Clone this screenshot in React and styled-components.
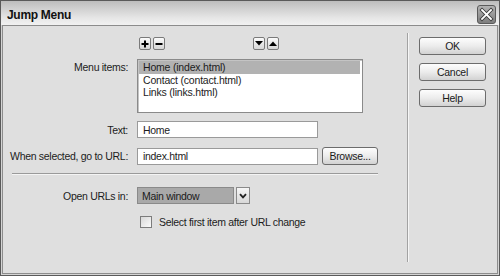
import React from 'react';
import styled, { createGlobalStyle } from 'styled-components';

const GlobalStyle = createGlobalStyle`
  html, body {
    margin: 0;
    padding: 0;
    background: #dfdfdf;
  }
  * {
    box-sizing: border-box;
  }
`;

const Window = styled.div`
  width: 500px;
  height: 276px;
  border: 1px solid #5a5a5a;
  background: #d4d4d4;
  display: flex;
  flex-direction: column;
  font-family: "Liberation Sans", Arial, sans-serif;
  font-size: 10.5px;
  letter-spacing: -0.3px;
  color: #1c1c1c;
`;

const TitleBar = styled.div`
  height: 24px;
  display: flex;
  align-items: center;
  justify-content: space-between;
  padding: 0 3px 0 6px;
  background: linear-gradient(#bdbdbd, #e6e6e6 70%, #f1f1f1);
`;

const Title = styled.span`
  font-weight: bold;
  font-size: 12px;
  letter-spacing: -0.3px;
  color: #111;
  margin-top: 4px;
`;

const CloseButton = styled.div`
  width: 19px;
  height: 19px;
  margin-top: 2px;
  display: flex;
`;

const Body = styled.div`
  flex: 1;
  margin: 0 1px 1px 1px;
  border: 1px solid #8c8c8c;
  background: #dfdfdf;
  display: flex;
`;

const Main = styled.div`
  width: 403px;
  padding-top: 11px;
  display: flex;
  flex-direction: column;
`;

const Row = styled.div`
  display: grid;
  grid-template-columns: 125px 1fr;
  column-gap: 9px;
  align-items: ${p => (p.$top ? 'start' : 'center')};
  margin-top: ${p => p.$gap || 0}px;
`;

const Label = styled.span`
  text-align: right;
  white-space: nowrap;
  padding-top: ${p => (p.$top ? 2 : 0)}px;
`;

const Controls = styled.div`
  display: flex;
  align-items: center;
  gap: ${p => p.$gap || 0}px;
`;

const ToolGroup = styled.div`
  display: flex;
  gap: 2px;
  margin-left: ${p => p.$offset || 0}px;
`;

const MiniButton = styled.div`
  width: 12px;
  height: 13px;
  border: 1px solid #7a7a7a;
  border-radius: 2px;
  background: linear-gradient(#fbfbfb, #d6d6d6);
  display: flex;
  align-items: center;
  justify-content: center;
`;

const ListBox = styled.div`
  width: 226px;
  height: 54px;
  border: 1px solid #8a8a8a;
  box-shadow: inset 1px 1px 0 #c4c4c4;
  background: #fff;
  padding: 1px 2px 0 1px;
`;

const ListItem = styled.div`
  height: 12.5px;
  line-height: 12.5px;
  padding-left: 4px;
  letter-spacing: -0.2px;
  background: ${p => (p.$selected ? '#b2b2b2' : 'transparent')};
  white-space: nowrap;
`;

const TextField = styled.div`
  width: 181px;
  height: 17px;
  border: 1px solid #9a9a9a;
  background: #fff;
  padding-left: 5px;
  display: flex;
  align-items: center;
`;

const Button = styled.div`
  width: ${p => p.$width}px;
  height: 18px;
  border: 1px solid #6c6c6c;
  border-radius: 3px;
  background: linear-gradient(#fdfdfd, #ececec 50%, #d2d2d2);
  display: flex;
  align-items: center;
  justify-content: center;
  color: #1a1a1a;
`;

const Separator = styled.div`
  margin: 8px 0 0 9px;
  width: 366px;
  height: 2px;
  border-top: 1px solid #9a9a9a;
  border-bottom: 1px solid #f4f4f4;
`;

const SelectField = styled.div`
  width: 97px;
  height: 17px;
  border: 1px solid #8a8a8a;
  background: #a9a9a9;
  padding-left: 4px;
  display: flex;
  align-items: center;
  color: #1a1a1a;
`;

const SelectArrow = styled.div`
  width: 14px;
  height: 17px;
  border: 1px solid #8a8a8a;
  background: linear-gradient(#f6f6f6, #d8d8d8);
  display: flex;
  align-items: center;
  justify-content: center;
`;

const CheckBox = styled.div`
  width: 12px;
  height: 12px;
  border: 1px solid #7c7c7c;
  background: linear-gradient(135deg, #d8d8d8, #fafafa);
  margin-left: 3px;
`;

const VDivider = styled.div`
  width: 2px;
  margin: 7px 0 11px 1px;
  border-left: 1px solid #a2a2a2;
  border-right: 1px solid #f6f6f6;
`;

const Side = styled.div`
  padding: 11px 0 0 10px;
  display: flex;
  flex-direction: column;
  gap: 8px;
`;

const Plus = () => (
  <svg width="8" height="8" viewBox="0 0 8 8">
    <path d="M4 0.5V7.5M0.5 4H7.5" stroke="#000" strokeWidth="2" />
  </svg>
);

const Minus = () => (
  <svg width="8" height="8" viewBox="0 0 8 8">
    <path d="M0.5 4H7.5" stroke="#000" strokeWidth="2" />
  </svg>
);

const Tri = ({ up }) => (
  <svg width="8" height="5" viewBox="0 0 8 5">
    <path d={up ? 'M0 5L4 0.5L8 5Z' : 'M0 0L8 0L4 4.5Z'} fill="#000" />
  </svg>
);

const Chevron = () => (
  <svg width="8" height="6" viewBox="0 0 8 6">
    <path d="M1 1.2L4 4.4L7 1.2" stroke="#222" strokeWidth="1.8" fill="none" />
  </svg>
);

const CloseIcon = () => (
  <svg width="19" height="19" viewBox="0 0 19 19">
    <defs>
      <linearGradient id="cg" x1="0" y1="0" x2="0" y2="1">
        <stop offset="0" stopColor="#b4b4b4" />
        <stop offset="1" stopColor="#7c7c7c" />
      </linearGradient>
    </defs>
    <rect x="0.5" y="0.5" width="18" height="18" rx="2.5" fill="url(#cg)" stroke="#5a5a5a" />
    <path d="M5 5L14 14M14 5L5 14" stroke="#3c3c3c" strokeWidth="3.6" strokeLinecap="square" />
    <path d="M5 5L14 14M14 5L5 14" stroke="#fff" strokeWidth="1.8" strokeLinecap="square" />
  </svg>
);

export default function App() {
  return (
    <>
      <GlobalStyle />
      <Window>
        <TitleBar>
          <Title>Jump Menu</Title>
          <CloseButton><CloseIcon /></CloseButton>
        </TitleBar>
        <Body>
          <Main>
            <Row>
              <span />
              <Controls>
                <ToolGroup $offset={2}>
                  <MiniButton><Plus /></MiniButton>
                  <MiniButton><Minus /></MiniButton>
                </ToolGroup>
                <ToolGroup $offset={88}>
                  <MiniButton><Tri /></MiniButton>
                  <MiniButton><Tri up /></MiniButton>
                </ToolGroup>
              </Controls>
            </Row>
            <Row $gap={9} $top>
              <Label $top>Menu items:</Label>
              <ListBox>
                <ListItem $selected>Home (index.html)</ListItem>
                <ListItem>Contact (contact.html)</ListItem>
                <ListItem>Links (links.html)</ListItem>
              </ListBox>
            </Row>
            <Row $gap={8}>
              <Label>Text:</Label>
              <TextField>Home</TextField>
            </Row>
            <Row $gap={9}>
              <Label>When selected, go to URL:</Label>
              <Controls $gap={4}>
                <TextField>index.html</TextField>
                <Button $width={56}>Browse...</Button>
              </Controls>
            </Row>
            <Separator />
            <Row $gap={12}>
              <Label>Open URLs in:</Label>
              <Controls $gap={2}>
                <SelectField>Main window</SelectField>
                <SelectArrow><Chevron /></SelectArrow>
              </Controls>
            </Row>
            <Row $gap={12}>
              <span />
              <Controls $gap={7}>
                <CheckBox />
                <span>Select first item after URL change</span>
              </Controls>
            </Row>
          </Main>
          <VDivider />
          <Side>
            <Button $width={67}>OK</Button>
            <Button $width={67}>Cancel</Button>
            <Button $width={67}>Help</Button>
          </Side>
        </Body>
      </Window>
    </>
  );
}
